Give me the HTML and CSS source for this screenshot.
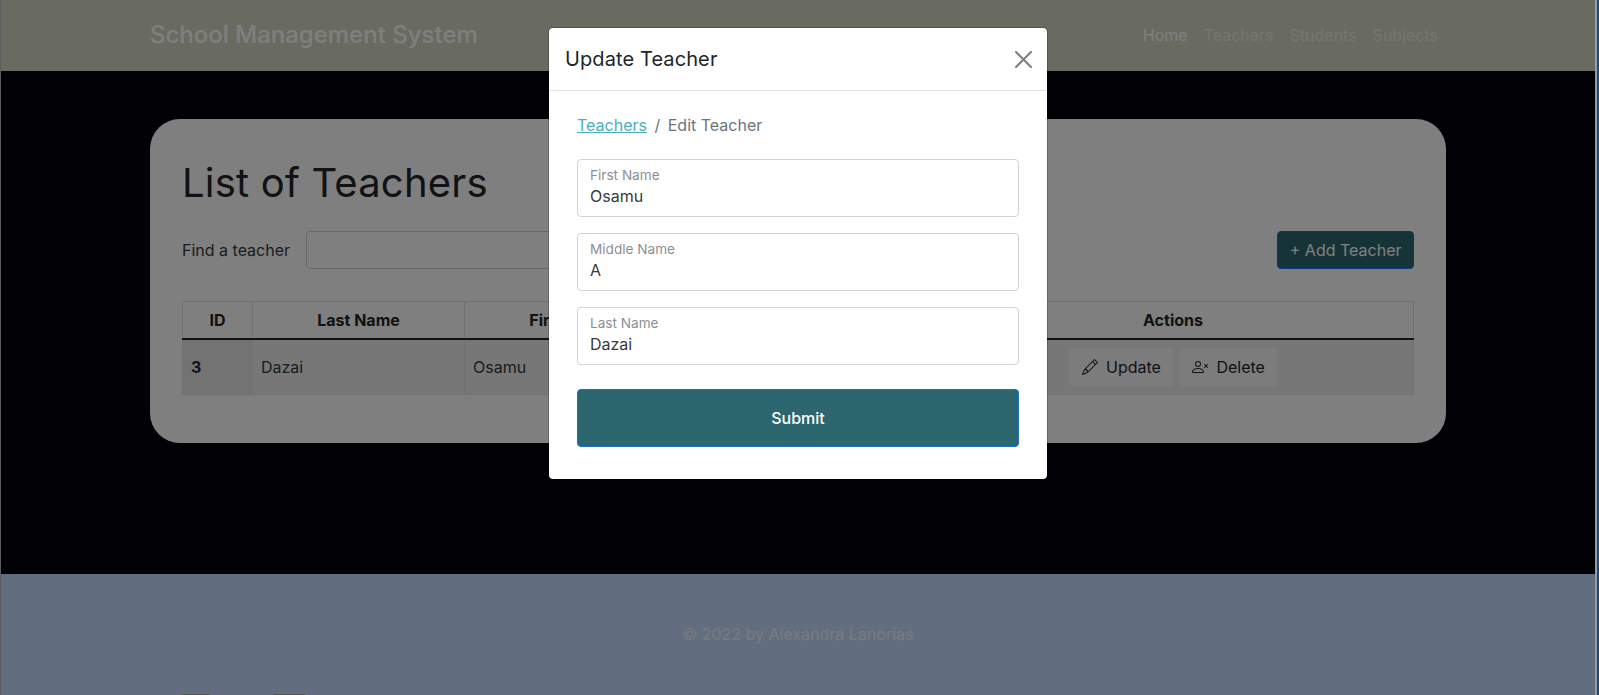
FILE: index.html
```html
<!DOCTYPE html>
<html lang="en">
<head>
  <meta charset="UTF-8" />
  <meta name="viewport" content="width=device-width, initial-scale=1" />
  <title>School Management System</title>
  <link rel="stylesheet" href="styles.css">
</head>
<body>

<div class="page">
  <header class="topbar">
    <div class="topbar-inner">
      <a class="brand" href="#">School Management System</a>
      <nav class="nav">
        <a class="nav-link active" href="#">Home</a>
        <a class="nav-link" href="#">Teachers</a>
        <a class="nav-link" href="#">Students</a>
        <a class="nav-link" href="#">Subjects</a>
      </nav>
    </div>
  </header>

  <main class="content">
    <section class="card">
      <h1>List of Teachers</h1>
      <div class="search-row">
        <label class="search-label" for="search">Find a teacher</label>
        <input class="search-input" id="search" type="text" />
        <button class="btn-add">+ Add Teacher</button>
      </div>
      <table class="teachers">
        <colgroup>
          <col class="col-id" />
          <col class="col-last" />
          <col class="col-first" />
          <col class="col-middle" />
          <col />
        </colgroup>
        <thead>
          <tr>
            <th>ID</th>
            <th>Last Name</th>
            <th>First Name</th>
            <th>Middle Name</th>
            <th>Actions</th>
          </tr>
        </thead>
        <tbody>
          <tr>
            <th class="row-id">3</th>
            <td>Dazai</td>
            <td>Osamu</td>
            <td>A</td>
            <td class="actions">
              <button class="btn-light">
                <svg class="icon" viewBox="0 0 16 16" fill="currentColor"><path d="M12.146.146a.5.5 0 0 1 .708 0l3 3a.5.5 0 0 1 0 .708l-10 10a.5.5 0 0 1-.168.11l-5 2a.5.5 0 0 1-.65-.65l2-5a.5.5 0 0 1 .11-.168l10-10zM11.207 2.5 13.5 4.793 14.793 3.5 12.5 1.207 11.207 2.5zm1.586 3L10.5 3.207 4 9.707V10h.5a.5.5 0 0 1 .5.5v.5h.5a.5.5 0 0 1 .5.5v.5h.293l6.5-6.5zm-9.761 5.175-.106.106-1.528 3.821 3.821-1.528.106-.106A.5.5 0 0 1 5 12.5V12h-.5a.5.5 0 0 1-.5-.5V11h-.5a.5.5 0 0 1-.468-.325z"/></svg>
                Update
              </button>
              <button class="btn-light">
                <svg class="icon" viewBox="0 0 16 16" fill="currentColor"><path d="M6 8a3 3 0 1 0 0-6 3 3 0 0 0 0 6zm2-3a2 2 0 1 1-4 0 2 2 0 0 1 4 0zm4 8c0 1-1 1-1 1H1s-1 0-1-1 1-4 6-4 6 3 6 4zm-1-.004c-.001-.246-.154-.986-.832-1.664C9.516 10.68 8.289 10 6 10c-2.29 0-3.516.68-4.168 1.332-.678.678-.83 1.418-.832 1.664h10z"/><path d="M12.146 5.146a.5.5 0 0 1 .708 0L14 6.293l1.146-1.147a.5.5 0 0 1 .708.708L14.707 7l1.147 1.146a.5.5 0 0 1-.708.708L14 7.707l-1.146 1.147a.5.5 0 0 1-.708-.708L13.293 7l-1.147-1.146a.5.5 0 0 1 0-.708z"/></svg>
                Delete
              </button>
            </td>
          </tr>
        </tbody>
      </table>
    </section>
  </main>

  <footer class="footer">
    <p class="copyright">© 2022 by Alexandra Lanorias</p>
    <div class="footer-links">
      <span class="footer-bit bit-a"></span>
      <span class="footer-bit bit-b"></span>
    </div>
  </footer>

  <div class="backdrop"></div>

  <div class="modal">
    <div class="modal-header">
      <h5 class="modal-title">Update Teacher</h5>
      <button class="btn-close" aria-label="Close">
        <svg viewBox="0 0 16 16" fill="currentColor"><path d="M.293.293a1 1 0 0 1 1.414 0L8 6.586 14.293.293a1 1 0 1 1 1.414 1.414L9.414 8l6.293 6.293a1 1 0 0 1-1.414 1.414L8 9.414l-6.293 6.293a1 1 0 0 1-1.414-1.414L6.586 8 .293 1.707a1 1 0 0 1 0-1.414z"/></svg>
      </button>
    </div>
    <div class="modal-body">
      <ol class="breadcrumb">
        <li><a href="#">Teachers</a></li>
        <li class="crumb-sep">/</li>
        <li class="crumb-active">Edit Teacher</li>
      </ol>
      <form class="edit-form">
        <div class="field">
          <label for="firstName">First Name</label>
          <input id="firstName" type="text" value="Osamu" />
        </div>
        <div class="field">
          <label for="middleName">Middle Name</label>
          <input id="middleName" type="text" value="A" />
        </div>
        <div class="field">
          <label for="lastName">Last Name</label>
          <input id="lastName" type="text" value="Dazai" />
        </div>
        <button class="btn-submit" type="button">Submit</button>
      </form>
    </div>
  </div>
</div>

<div class="scroll-strip"></div>

</body>
</html>
```

FILE: styles.css
```css
* {
  box-sizing: border-box;
}

html, body {
  margin: 0;
  padding: 0;
  height: 100%;
  overflow: hidden;
}

body {
  display: flex;
  background: #000;
  border-left: 1px solid #5c5c5c;
  font-family: Inter, "Liberation Sans", sans-serif;
  font-size: 16px;
  line-height: 24px;
  color: #212529;
}

.page {
  position: relative;
  flex: 1;
  min-width: 0;
  height: 100%;
  overflow: hidden;
}

.scroll-strip {
  width: 4px;
  flex: none;
  border-left: 2px solid #9a9a9a;
  background: #1d4a78;
}

/* top bar */
.topbar {
  height: 71px;
  padding-bottom: 2px;
  background: #d4d6c0;
}

.topbar-inner {
  width: 1296px;
  height: 100%;
  margin: 0 auto;
  display: flex;
  align-items: center;
  justify-content: space-between;
}

.brand {
  font-size: 24px;
  font-weight: 500;
  color: #fff;
  text-decoration: none;
}

.nav {
  display: flex;
}

.nav-link {
  padding: 8px;
  color: rgba(255, 255, 255, 0.55);
  text-decoration: none;
}

.nav-link.active {
  color: #fff;
}

/* list */
.content {
  height: 503px;
  padding-top: 48px;
  background: #00000a;
}

.card {
  width: 1296px;
  margin: 0 auto;
  padding: 40px 32px 48px;
  background: #fff;
  border-radius: 30px;
}

h1 {
  margin: 0 0 24px;
  font-size: 40px;
  line-height: 48px;
  font-weight: 400;
  letter-spacing: 0.2px;
}

.search-row {
  display: flex;
  align-items: center;
  margin-bottom: 32px;
}

.search-label {
  margin-right: 16px;
  color: #343a40;
}

.search-input {
  width: 560px;
  height: 38px;
  border: 1px solid #ced4da;
  border-radius: 4px;
}

.btn-add {
  margin-left: auto;
  height: 38px;
  padding: 0 11.5px;
  border: 1px solid #0d6efd;
  border-radius: 4px;
  background: #2c666e;
  color: #fff;
  font: inherit;
}

.teachers {
  width: 100%;
  table-layout: fixed;
  border-collapse: collapse;
}

.col-id { width: 70px; }
.col-last { width: 212px; }
.col-first { width: 214px; }
.col-middle { width: 254px; }

.teachers th,
.teachers td {
  padding: 6px 8px;
  border: 1px solid #dee2e6;
  text-align: center;
  font-weight: 700;
}

.teachers thead th {
  border-bottom: 2px solid #212529;
}

.teachers tbody td,
.teachers tbody th {
  height: 55px;
  padding: 0 8px;
  background: #eeeeee;
  color: #343a40;
  text-align: left;
  font-weight: 400;
}

.teachers tbody .row-id {
  background: #e6e6e6;
  color: #212529;
  font-weight: 700;
}

.actions {
  white-space: nowrap;
}

.teachers .actions {
  padding-left: 136px;
}

.btn-light {
  display: inline-flex;
  align-items: center;
  gap: 8px;
  height: 38px;
  padding: 0 12px;
  margin-right: 1px;
  border: 1px solid #f8f9fa;
  border-radius: 4px;
  background: #f8f9fa;
  color: #212529;
  font: inherit;
}

.icon {
  width: 16px;
  height: 16px;
}

/* footer */
.footer {
  height: 200px;
  padding-top: 48px;
  background: #c4dcff;
}

.copyright {
  margin: 0 0 48px;
  text-align: center;
  color: #f2f6fa;
}

.footer-links {
  display: flex;
  padding-left: 180px;
}

.footer-bit {
  height: 2px;
  background: #aaa;
}

.bit-a { width: 29px; margin-right: 64px; }
.bit-b { width: 31px; }

/* modal */
.backdrop {
  position: absolute;
  inset: 0;
  background: rgba(0, 0, 0, 0.5);
}

.modal {
  position: absolute;
  top: 27px;
  left: 547px;
  width: 500px;
  background: #fff;
  border: 1px solid rgba(0, 0, 0, 0.2);
  border-radius: 5px;
  background-clip: padding-box;
}

.modal-header {
  display: flex;
  align-items: center;
  justify-content: space-between;
  padding: 16px;
  border-bottom: 1px solid #dee2e6;
}

.modal-title {
  margin: 0;
  font-size: 20px;
  line-height: 30px;
  font-weight: 400;
  letter-spacing: 0.1px;
}

.btn-close {
  display: flex;
  width: 17px;
  height: 17px;
  margin-right: -1px;
  padding: 0;
  border: 0;
  background: none;
  color: #7f7f7f;
}

.modal-body {
  padding: 22px 28px 32px;
}

.breadcrumb {
  display: flex;
  gap: 7.5px;
  margin: 0 0 22px;
  padding: 0;
  list-style: none;
}

.breadcrumb a {
  color: #47b0bd;
}

.crumb-sep,
.crumb-active {
  color: #6c757d;
}

.field {
  height: 58px;
  margin-bottom: 16px;
  padding: 6px 12px 0;
  border: 1px solid #ced4da;
  border-radius: 4px;
}

.field label {
  display: block;
  font-size: 13.6px;
  line-height: 18px;
  color: #8a8f94;
}

.field input {
  display: block;
  width: 100%;
  padding: 0;
  border: 0;
  outline: 0;
  font: inherit;
  color: #343a40;
}

.btn-submit {
  display: block;
  width: 100%;
  height: 58px;
  margin-top: 24px;
  border: 1px solid #0d6efd;
  border-radius: 4px;
  background: #2c666e;
  color: #fff;
  font: inherit;
  font-weight: 500;
}
```
